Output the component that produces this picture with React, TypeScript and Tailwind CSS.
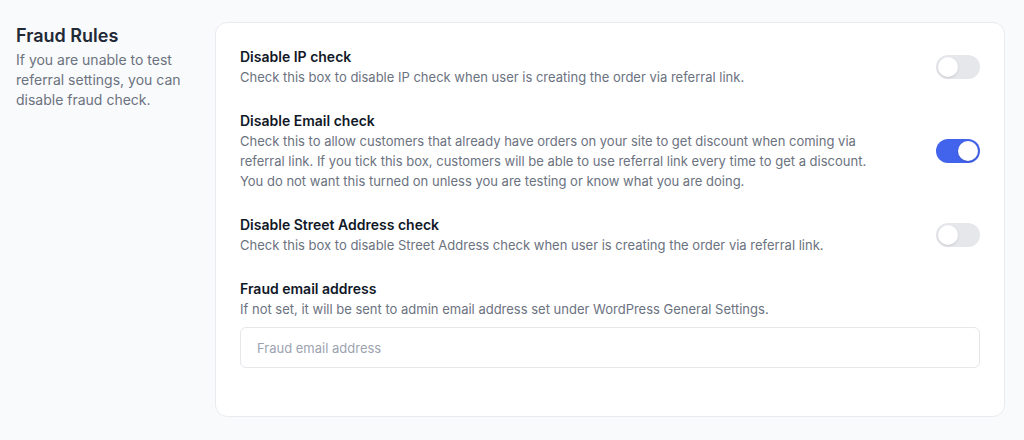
import React from "react";

type Rule = {
  title: string;
  desc: string;
  on: boolean;
};

const rules: Rule[] = [
  {
    title: "Disable IP check",
    desc: "Check this box to disable IP check when user is creating the order via referral link.",
    on: false,
  },
  {
    title: "Disable Email check",
    desc: "Check this to allow customers that already have orders on your site to get discount when coming via referral link. If you tick this box, customers will be able to use referral link every time to get a discount. You do not want this turned on unless you are testing or know what you are doing.",
    on: true,
  },
  {
    title: "Disable Street Address check",
    desc: "Check this box to disable Street Address check when user is creating the order via referral link.",
    on: false,
  },
];

function Toggle({ on, onChange }: { on: boolean; onChange: () => void }) {
  return (
    <button
      type="button"
      onClick={onChange}
      className={
        "flex h-6 w-11 shrink-0 items-center rounded-full p-[2px] transition-colors " +
        (on ? "justify-end bg-[#4263eb]" : "justify-start bg-[#e5e7eb]")
      }
    >
      <span className="h-5 w-5 rounded-full bg-white shadow-sm" />
    </button>
  );
}

export default function App() {
  const [state, setState] = React.useState(rules.map((r) => r.on));

  return (
    <div
      className="min-h-[440px] bg-[#f9fafb] pl-4 pr-[19px] pt-[22px]"
      style={{ fontFamily: "Inter, 'Noto Sans', sans-serif" }}
    >
      <div className="flex gap-[19px]">
        <div className="w-[180px] shrink-0">
          <h2 className="text-lg font-semibold leading-7 text-[#1f2937]">Fraud Rules</h2>
          <p className="text-sm leading-5 text-[#6b7280]">
            If you are unable to test referral settings, you can disable fraud check.
          </p>
        </div>

        <div className="flex-1 rounded-xl border border-[#e9ebef] bg-white px-6 pb-12 pt-[24px]">
          <div className="flex flex-col gap-6">
            {rules.map((r, i) => (
              <div key={r.title} className="flex items-center justify-between">
                <div className="w-[640px]">
                  <div className="text-sm font-semibold leading-5 text-[#111827]">{r.title}</div>
                  <p className="text-[13px] leading-5 text-[#6b7280]">{r.desc}</p>
                </div>
                <Toggle
                  on={state[i]}
                  onChange={() => setState((s) => s.map((v, j) => (j === i ? !v : v)))}
                />
              </div>
            ))}

            <div>
              <div className="text-sm font-semibold leading-5 text-[#111827]">Fraud email address</div>
              <p className="text-[13px] leading-5 text-[#6b7280]">
                If not set, it will be sent to admin email address set under WordPress General Settings.
              </p>
              <input
                type="email"
                placeholder="Fraud email address"
                className="mt-2 h-[41px] w-full rounded-md border border-[#e5e7eb] px-4 text-[13px] text-[#111827] outline-none placeholder:text-[#9ca3af]"
              />
            </div>
          </div>
        </div>
      </div>
    </div>
  );
}
